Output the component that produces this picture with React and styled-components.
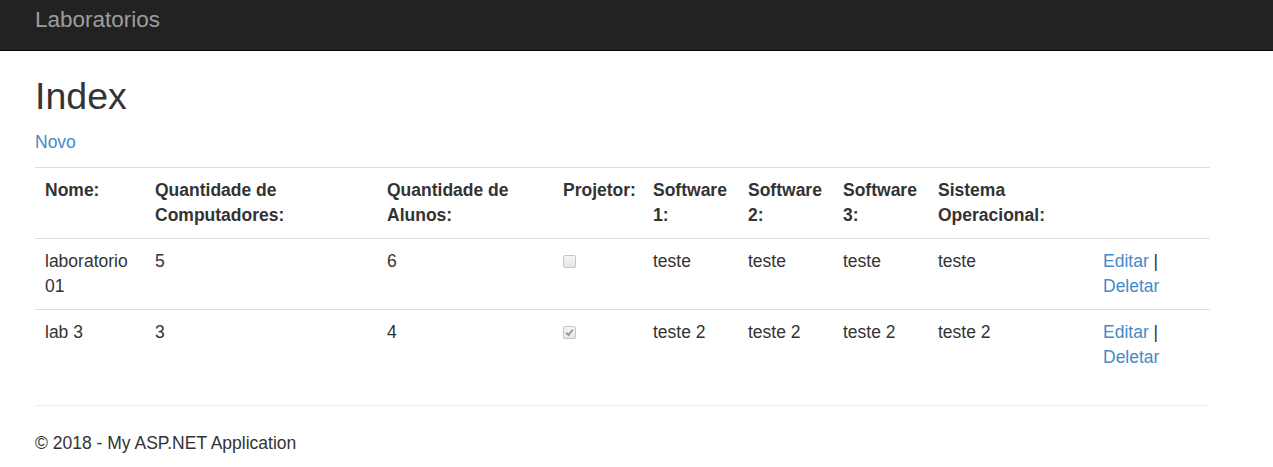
import React from "react";
import styled, { createGlobalStyle } from "styled-components";

const GlobalStyle = createGlobalStyle`
  html, body { margin: 0; padding: 0; background: #fff; }
  body {
    font-family: "Liberation Sans", Arial, Helvetica, sans-serif;
    font-size: 17.5px;
    line-height: 25px;
    color: #333;
  }
  * { box-sizing: border-box; }
`;

const Navbar = styled.header`
  height: 51px;
  background: #222;
  border-bottom: 1px solid #080808;
`;

const NavInner = styled.div`
  margin-left: 35px;
  width: 1175px;
`;

const Brand = styled.a`
  display: inline-block;
  padding-top: 6.5px;
  font-size: 22.5px;
  line-height: 25px;
  color: #9d9d9d;
  text-decoration: none;
`;

const Container = styled.main`
  margin-left: 35px;
  width: 1175px;
`;

const Title = styled.h2`
  margin: 25px 0 12.5px;
  font-size: 37.5px;
  line-height: 1.1;
  font-weight: 500;
  color: #333;
`;

const Para = styled.p`
  margin: 0 0 12.5px;
`;

const Link = styled.a`
  color: #428bca;
  text-decoration: none;
`;

const Table = styled.table`
  width: 100%;
  table-layout: fixed;
  border-collapse: collapse;
  border-spacing: 0;
  margin-bottom: 25px;
`;

const Th = styled.th`
  text-align: left;
  font-weight: bold;
  vertical-align: top;
  padding: 10px;
  line-height: 25px;
  border-top: 1px solid #ddd;
`;

const Td = styled.td`
  vertical-align: top;
  padding: 10px;
  line-height: 25px;
  border-top: 1px solid #ddd;
`;

const Box = styled.span`
  display: block;
  width: 13px;
  height: 13px;
  margin-top: 5.5px;
  border: 1px solid #c6c6c6;
  border-radius: 2px;
  background: linear-gradient(#f4f4f4, #e6e6e6);
  position: relative;
  svg { position: absolute; left: 1px; top: 1px; }
`;

const Hr = styled.hr`
  margin: 25px 0;
  border: 0;
  border-top: 1px solid #eee;
  height: 0;
`;

const Footer = styled.footer`
  p { margin: 0 0 12.5px; }
`;

const CheckBox = ({ checked }) => (
  <Box>
    {checked && (
      <svg width="9" height="9" viewBox="0 0 9 9">
        <path d="M1.2 4.8 L3.4 7 L7.8 1.8" fill="none" stroke="#8a8a8a" strokeWidth="1.6" />
      </svg>
    )}
  </Box>
);

const cols = [110, 232, 176, 90, 95, 95, 95, 165, 117];

const rows = [
  { nome: "laboratorio 01", comp: "5", alunos: "6", proj: false, s1: "teste", s2: "teste", s3: "teste", so: "teste" },
  { nome: "lab 3", comp: "3", alunos: "4", proj: true, s1: "teste 2", s2: "teste 2", s3: "teste 2", so: "teste 2" },
];

export default function App() {
  return (
    <>
      <GlobalStyle />
      <Navbar>
        <NavInner>
          <Brand href="#">Laboratorios</Brand>
        </NavInner>
      </Navbar>
      <Container>
        <Title>Index</Title>
        <Para>
          <Link href="#">Novo</Link>
        </Para>
        <Table>
          <colgroup>
            {cols.map((w, i) => (
              <col key={i} style={{ width: w }} />
            ))}
          </colgroup>
          <tbody>
            <tr>
              <Th>Nome:</Th>
              <Th>Quantidade de Computadores:</Th>
              <Th>Quantidade de Alunos:</Th>
              <Th>Projetor:</Th>
              <Th>Software 1:</Th>
              <Th>Software 2:</Th>
              <Th>Software 3:</Th>
              <Th>Sistema Operacional:</Th>
              <Th></Th>
            </tr>
            {rows.map((r, i) => (
              <tr key={i}>
                <Td>{r.nome}</Td>
                <Td>{r.comp}</Td>
                <Td>{r.alunos}</Td>
                <Td>
                  <CheckBox checked={r.proj} />
                </Td>
                <Td>{r.s1}</Td>
                <Td>{r.s2}</Td>
                <Td>{r.s3}</Td>
                <Td>{r.so}</Td>
                <Td>
                  <Link href="#">Editar</Link> | <Link href="#">Deletar</Link>
                </Td>
              </tr>
            ))}
          </tbody>
        </Table>
        <Hr />
        <Footer>
          <p>© 2018 - My ASP.NET Application</p>
        </Footer>
      </Container>
    </>
  );
}
